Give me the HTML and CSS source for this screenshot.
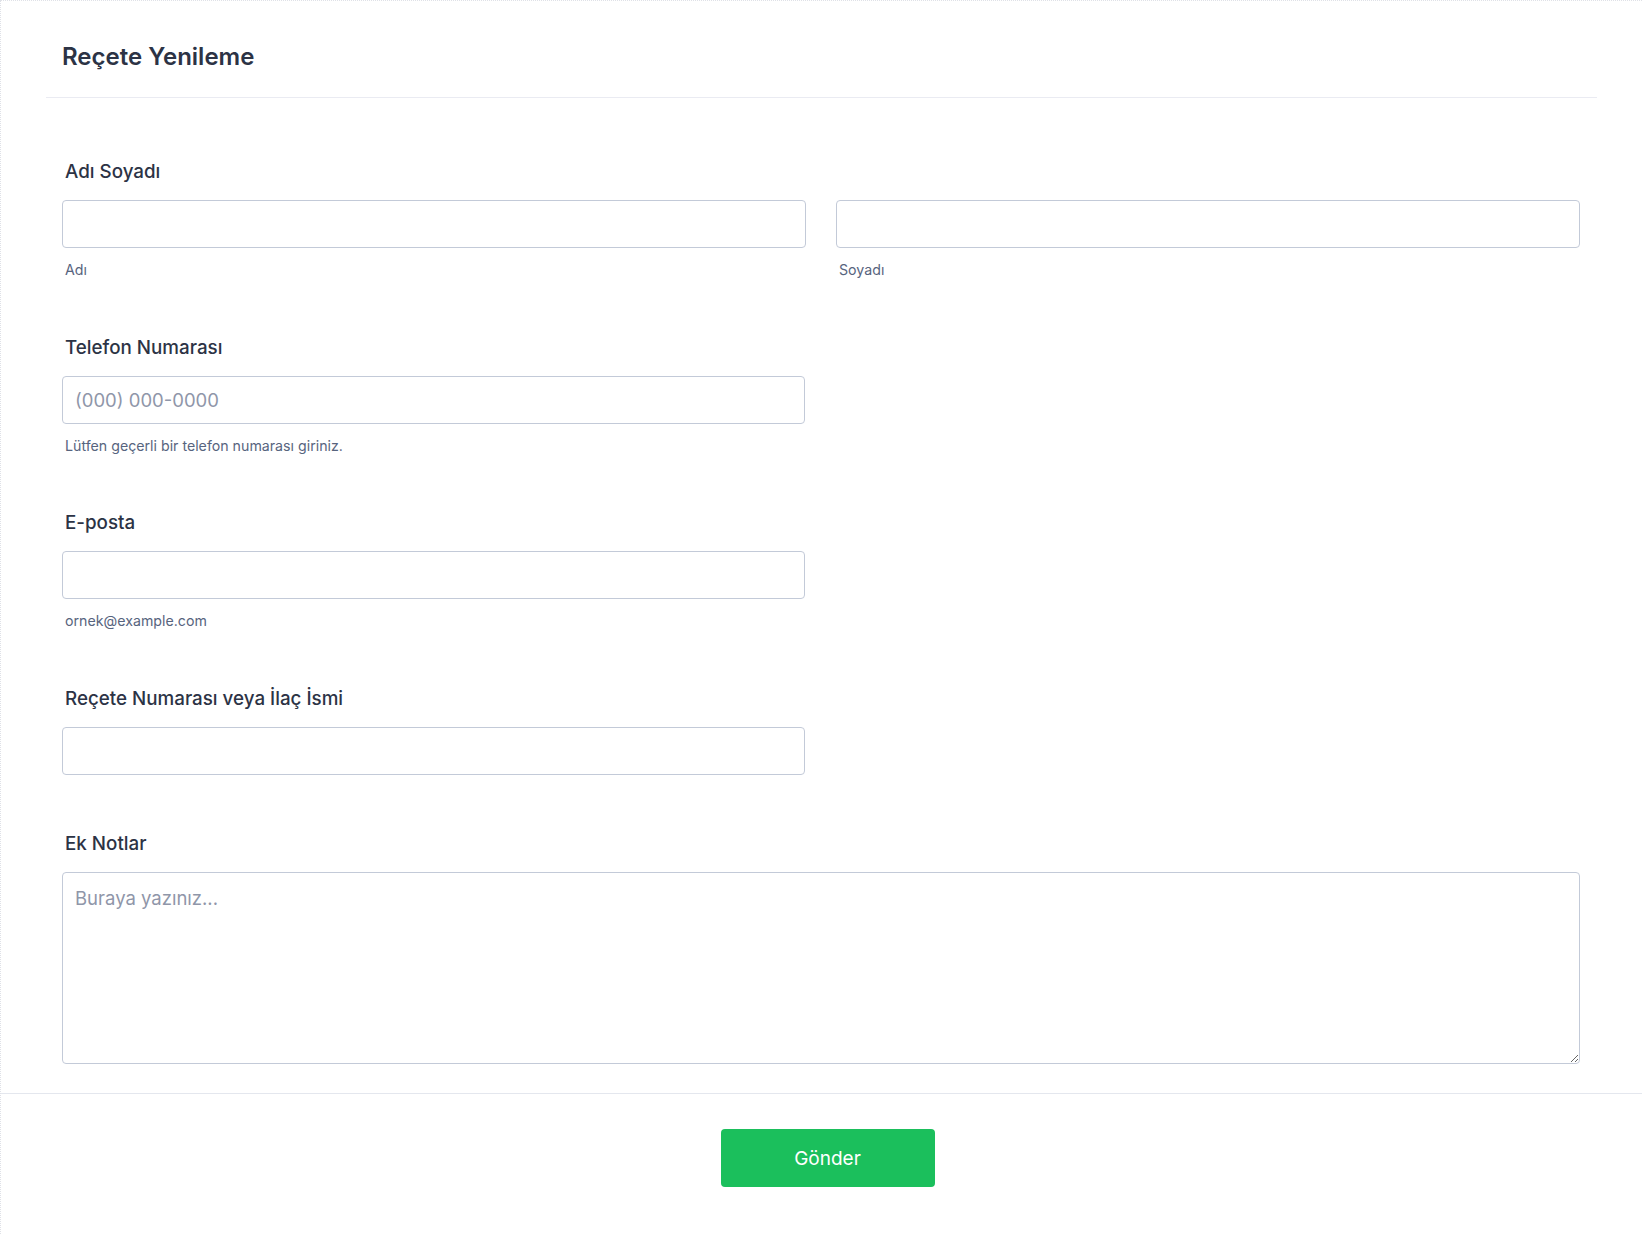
FILE: index.html
```html
<!DOCTYPE html>
<html lang="tr">
<head>
<meta charset="utf-8">
<title>Reçete Yenileme</title>
<link rel="stylesheet" href="styles.css">
</head>
<body>
<div class="form">
  <div class="form-header">
    <h1 class="form-title">Reçete Yenileme</h1>
  </div>
  <div class="fields">
    <div class="field">
      <label class="label">Adı Soyadı</label>
      <div class="two-col">
        <div class="sub">
          <input class="input" type="text">
          <span class="sublabel">Adı</span>
        </div>
        <div class="sub">
          <input class="input" type="text">
          <span class="sublabel">Soyadı</span>
        </div>
      </div>
    </div>
    <div class="field">
      <label class="label">Telefon Numarası</label>
      <div class="sub half">
        <input class="input" type="tel" placeholder="(000) 000-0000">
        <span class="sublabel">Lütfen geçerli bir telefon numarası giriniz.</span>
      </div>
    </div>
    <div class="field">
      <label class="label">E-posta</label>
      <div class="sub half">
        <input class="input" type="email">
        <span class="sublabel">ornek@example.com</span>
      </div>
    </div>
    <div class="field field-plain">
      <label class="label">Reçete Numarası veya İlaç İsmi</label>
      <div class="sub half">
        <input class="input" type="text">
      </div>
    </div>
    <div class="field">
      <label class="label">Ek Notlar</label>
      <textarea class="textarea" placeholder="Buraya yazınız..."></textarea>
    </div>
  </div>
  <div class="footer">
    <button class="submit" type="button">Gönder</button>
  </div>
</div>
</body>
</html>
```

FILE: styles.css
```css
* {
  box-sizing: border-box;
}

html, body {
  margin: 0;
  padding: 0;
  background: #ffffff;
}

body {
  font-family: Inter, "Noto Sans", "Liberation Sans", sans-serif;
  color: #2c3345;
}

.form {
  min-height: 1234px;
  border-top: 1px dotted #dfe1e7;
  border-left: 1px dotted #dfe1e7;
  display: flex;
  flex-direction: column;
}

.form-header {
  margin: 0 45px 0 45px;
  padding: 40px 16px 24px 16px;
  border-bottom: 1px solid #eaebf2;
}

.form-title {
  margin: 0;
  font-size: 24px;
  line-height: 32px;
  font-weight: 600;
  color: #2c3345;
}

.fields {
  padding: 60px 62px 29px 61px;
  display: flex;
  flex-direction: column;
  gap: 53.5px;
}

.field {
  display: flex;
  flex-direction: column;
}

.field-plain {
  padding-bottom: 2px;
}

.label {
  display: block;
  font-size: 18.8px;
  line-height: 28px;
  font-weight: 500;
  color: #2c3345;
  padding-left: 3px;
  margin-bottom: 14px;
}

.two-col {
  display: grid;
  grid-template-columns: 1fr 1fr;
  gap: 30px;
}

.sub {
  display: flex;
  flex-direction: column;
}

.half {
  width: 743px;
}

.input {
  display: block;
  width: 100%;
  height: 48px;
  border: 1px solid #c3cad8;
  border-radius: 4px;
  background: #ffffff;
  padding: 0 12px;
  font-family: inherit;
  font-size: 18.5px;
  color: #2c3345;
  outline: none;
}

.input::placeholder,
.textarea::placeholder {
  color: #8f96a9;
  opacity: 1;
}

.sublabel {
  display: block;
  margin-top: 12px;
  padding-left: 3px;
  font-size: 14.2px;
  line-height: 20px;
  color: #57647e;
}

.textarea {
  display: block;
  width: 100%;
  height: 192px;
  border: 1px solid #c3cad8;
  border-radius: 4px;
  background: #ffffff;
  padding: 11px 12px;
  font-family: inherit;
  font-size: 18.5px;
  line-height: 28px;
  color: #2c3345;
  resize: vertical;
  outline: none;
}

.footer {
  border-top: 1px solid #e4e7ee;
  padding: 35px 0 47px 12px;
  display: flex;
  justify-content: center;
  flex: 1;
}

.submit {
  width: 214px;
  height: 58px;
  border: none;
  border-radius: 4px;
  background: #1bbf5c;
  color: #ffffff;
  font-family: inherit;
  font-size: 19px;
  font-weight: 400;
  cursor: pointer;
}
```
